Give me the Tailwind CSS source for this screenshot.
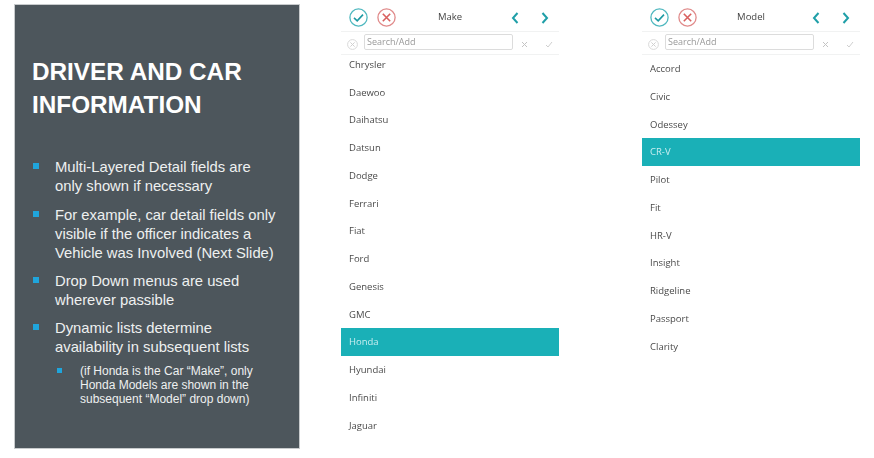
<!DOCTYPE html>
<html lang="en">
<head>
    <meta charset="UTF-8">
    <title>Driver and Car Information</title>
    <script src="https://cdn.jsdelivr.net/npm/@tailwindcss/browser@4"></script>
</head>
<body class="bg-white w-[874px] h-[458px] overflow-hidden flex items-start blur-[0.4px] font-['Open_Sans',sans-serif]">

    <!-- slide panel -->
    <section class="ml-[14px] mt-[4px] w-[286px] h-[445px] shrink-0 bg-[#4d565c] border border-[#c8cbcd] pl-[17px] pr-[8px] pt-[50px] text-[#eef0f0] font-['Liberation_Sans',sans-serif]">
        <h1 class="text-[24.3px] leading-[33px] font-bold text-white">DRIVER AND CAR<br>INFORMATION</h1>
        <ul class="mt-[37px] text-[14.8px] leading-[19px]">
            <li class="flex mb-[10px]"><span class="w-[6px] h-[6px] mt-[5px] ml-[1px] mr-[16px] shrink-0 bg-[#1fa5dc]"></span><span>Multi-Layered Detail fields are<br>only shown if necessary</span></li>
            <li class="flex mb-[9px]"><span class="w-[6px] h-[6px] mt-[5px] ml-[1px] mr-[16px] shrink-0 bg-[#1fa5dc]"></span><span>For example, car detail fields only<br>visible if the officer indicates a<br>Vehicle was Involved (Next Slide)</span></li>
            <li class="flex mb-[9px]"><span class="w-[6px] h-[6px] mt-[5px] ml-[1px] mr-[16px] shrink-0 bg-[#1fa5dc]"></span><span>Drop Down menus are used<br>wherever passible</span></li>
            <li class="flex mb-[7px]"><span class="w-[6px] h-[6px] mt-[5px] ml-[1px] mr-[16px] shrink-0 bg-[#1fa5dc]"></span><span>Dynamic lists determine<br>availability in subsequent lists</span></li>
            <li class="flex ml-[25px] text-[12px] leading-[14px]"><span class="w-[5px] h-[5px] mt-[4px] mr-[18px] shrink-0 bg-[#1fa5dc]"></span><span>(if Honda is the Car “Make”, only<br>Honda Models are shown in the<br>subsequent “Model” drop down)</span></li>
        </ul>
    </section>

    <!-- Make list -->
    <section class="ml-[41px] w-[218px] shrink-0">
        <div class="h-[32px] flex items-center border-b border-[#f1f2f2] pt-[4px]">
            <svg class="ml-[8px]" width="19" height="19" viewBox="0 0 19 19" fill="none"><circle cx="9.5" cy="9.5" r="8.6" stroke="#4fb8bf" stroke-width="1.3"/><path d="M5 9.8l3.2 3L14 6.6" stroke="#1e9aa3" stroke-width="1.6"/></svg>
            <svg class="ml-[9px]" width="19" height="19" viewBox="0 0 19 19" fill="none"><circle cx="9.5" cy="9.5" r="8.6" stroke="#e08a8a" stroke-width="1.3"/><path d="M5.8 5.8l7.4 7.4M13.2 5.8l-7.4 7.4" stroke="#d9605f" stroke-width="1.6"/></svg>
            <span class="w-[72px] ml-[18px] text-center text-[9.5px] text-[#444]">Make</span>
            <svg class="ml-[25px]" width="8" height="12" viewBox="0 0 8 12" fill="none"><path d="M6.5 1L2 6l4.5 5" stroke="#1f9fa8" stroke-width="2"/></svg>
            <svg class="ml-[22px]" width="8" height="12" viewBox="0 0 8 12" fill="none"><path d="M1.5 1L6 6l-4.5 5" stroke="#1f9fa8" stroke-width="2"/></svg>
        </div>
        <div class="h-[23px] flex items-center border-b border-[#f1f2f2]">
            <svg class="ml-[6px] mt-[3px]" width="11" height="11" viewBox="0 0 11 11" fill="none"><circle cx="5.5" cy="5.5" r="4.9" stroke="#d8d8d8"/><path d="M3.4 3.4l4.2 4.2M7.6 3.4l-4.2 4.2" stroke="#d0d0d0"/></svg>
            <div class="ml-[6px] w-[149px] h-[16px] border border-[#dcdcdc] rounded-[2px] pl-[2px] text-[9px] leading-[13px] text-[#999] -mt-[2px]">Search/Add</div>
            <svg class="ml-[8px] mt-[2px]" width="7" height="7" viewBox="0 0 7 7" fill="none"><path d="M1 1l5 5M6 1L1 6" stroke="#c4c4c4"/></svg>
            <svg class="ml-[17px] mt-[2px]" width="8" height="7" viewBox="0 0 8 7" fill="none"><path d="M1 4l2 2 4-5" stroke="#cfcfcf"/></svg>
        </div>
        <ul class="-mt-[4.5px] text-[9.5px] text-[#4a4a4a]">
            <li class="h-[27.75px] pl-[8px] pt-[1px] flex items-center">Chrysler</li>
            <li class="h-[27.75px] pl-[8px] pt-[1px] flex items-center">Daewoo</li>
            <li class="h-[27.75px] pl-[8px] pt-[1px] flex items-center">Daihatsu</li>
            <li class="h-[27.75px] pl-[8px] pt-[1px] flex items-center">Datsun</li>
            <li class="h-[27.75px] pl-[8px] pt-[1px] flex items-center">Dodge</li>
            <li class="h-[27.75px] pl-[8px] pt-[1px] flex items-center">Ferrari</li>
            <li class="h-[27.75px] pl-[8px] pt-[1px] flex items-center">Fiat</li>
            <li class="h-[27.75px] pl-[8px] pt-[1px] flex items-center">Ford</li>
            <li class="h-[27.75px] pl-[8px] pt-[1px] flex items-center">Genesis</li>
            <li class="h-[27.75px] pl-[8px] pt-[1px] flex items-center">GMC</li>
            <li class="h-[27.75px] pl-[8px] pt-[1px] flex items-center bg-[#1ab0b7] text-[#c9eef0]">Honda</li>
            <li class="h-[27.75px] pl-[8px] pt-[1px] flex items-center">Hyundai</li>
            <li class="h-[27.75px] pl-[8px] pt-[1px] flex items-center">Infiniti</li>
            <li class="h-[27.75px] pl-[8px] pt-[1px] flex items-center">Jaguar</li>
        </ul>
    </section>

    <!-- Model list -->
    <section class="ml-[83px] w-[218px] shrink-0">
        <div class="h-[32px] flex items-center border-b border-[#f1f2f2] pt-[4px]">
            <svg class="ml-[8px]" width="19" height="19" viewBox="0 0 19 19" fill="none"><circle cx="9.5" cy="9.5" r="8.6" stroke="#4fb8bf" stroke-width="1.3"/><path d="M5 9.8l3.2 3L14 6.6" stroke="#1e9aa3" stroke-width="1.6"/></svg>
            <svg class="ml-[9px]" width="19" height="19" viewBox="0 0 19 19" fill="none"><circle cx="9.5" cy="9.5" r="8.6" stroke="#e08a8a" stroke-width="1.3"/><path d="M5.8 5.8l7.4 7.4M13.2 5.8l-7.4 7.4" stroke="#d9605f" stroke-width="1.6"/></svg>
            <span class="w-[72px] ml-[18px] text-center text-[9.5px] text-[#444]">Model</span>
            <svg class="ml-[25px]" width="8" height="12" viewBox="0 0 8 12" fill="none"><path d="M6.5 1L2 6l4.5 5" stroke="#1f9fa8" stroke-width="2"/></svg>
            <svg class="ml-[22px]" width="8" height="12" viewBox="0 0 8 12" fill="none"><path d="M1.5 1L6 6l-4.5 5" stroke="#1f9fa8" stroke-width="2"/></svg>
        </div>
        <div class="h-[23px] flex items-center border-b border-[#f1f2f2]">
            <svg class="ml-[6px] mt-[3px]" width="11" height="11" viewBox="0 0 11 11" fill="none"><circle cx="5.5" cy="5.5" r="4.9" stroke="#d8d8d8"/><path d="M3.4 3.4l4.2 4.2M7.6 3.4l-4.2 4.2" stroke="#d0d0d0"/></svg>
            <div class="ml-[6px] w-[149px] h-[16px] border border-[#dcdcdc] rounded-[2px] pl-[2px] text-[9px] leading-[13px] text-[#999] -mt-[2px]">Search/Add</div>
            <svg class="ml-[8px] mt-[2px]" width="7" height="7" viewBox="0 0 7 7" fill="none"><path d="M1 1l5 5M6 1L1 6" stroke="#c4c4c4"/></svg>
            <svg class="ml-[17px] mt-[2px]" width="8" height="7" viewBox="0 0 8 7" fill="none"><path d="M1 4l2 2 4-5" stroke="#cfcfcf"/></svg>
        </div>
        <ul class="-mt-[0.25px] text-[9.5px] text-[#4a4a4a]">
            <li class="h-[27.75px] pl-[8px] pt-[1px] flex items-center">Accord</li>
            <li class="h-[27.75px] pl-[8px] pt-[1px] flex items-center">Civic</li>
            <li class="h-[27.75px] pl-[8px] pt-[1px] flex items-center">Odessey</li>
            <li class="h-[27.75px] pl-[8px] pt-[1px] flex items-center bg-[#1ab0b7] text-[#c9eef0]">CR-V</li>
            <li class="h-[27.75px] pl-[8px] pt-[1px] flex items-center">Pilot</li>
            <li class="h-[27.75px] pl-[8px] pt-[1px] flex items-center">Fit</li>
            <li class="h-[27.75px] pl-[8px] pt-[1px] flex items-center">HR-V</li>
            <li class="h-[27.75px] pl-[8px] pt-[1px] flex items-center">Insight</li>
            <li class="h-[27.75px] pl-[8px] pt-[1px] flex items-center">Ridgeline</li>
            <li class="h-[27.75px] pl-[8px] pt-[1px] flex items-center">Passport</li>
            <li class="h-[27.75px] pl-[8px] pt-[1px] flex items-center">Clarity</li>
        </ul>
    </section>

</body>
</html>
